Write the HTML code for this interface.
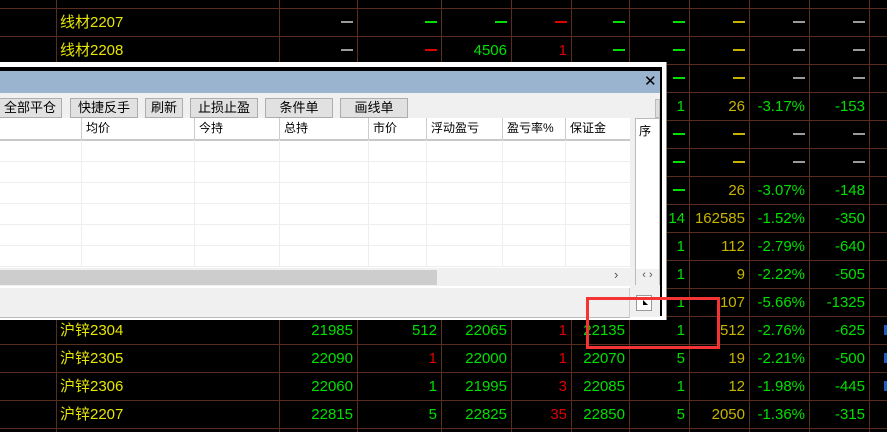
<!DOCTYPE html>
<html><head><meta charset="utf-8">
<style>
*{margin:0;padding:0;box-sizing:border-box}
body{width:887px;height:432px;overflow:hidden;background:#000;position:relative;font-family:"Liberation Sans","Noto Sans CJK SC",sans-serif}
.vl{position:absolute;top:0;height:432px;width:1px;background:#5a2e1e}
.hl{position:absolute;left:0;width:887px;height:1px;background:#5a2e1e}
.r{position:absolute;left:0;width:887px;height:28px;font-size:15px;line-height:29px}
.r span{position:absolute;top:0;text-align:right}
.n{left:60px;width:200px;text-align:left!important;color:#e6e600}
.c1{left:279px;width:74px}.c2{left:357px;width:80px}.c3{left:441px;width:66px}.c4{left:511px;width:56px}
.c5{left:571px;width:54px}.c6{left:629px;width:56px}.c7{left:689px;width:56px}.c8{left:749px;width:56px}.c9{left:809px;width:56px}
.g{color:#00e000}.y{color:#c8b400}.rd{color:#e00000}.gy{color:#9a9a9a}
i.d{display:inline-block;width:12px;height:2px;vertical-align:middle;background:currentColor;margin-bottom:2px}
.dlg{position:absolute;left:0;top:62px;width:667px;height:258px;background:#fff;border-right:1px solid #888}
.inn{position:absolute;left:0;top:5px;width:662px;height:249px;background:#000}
.body{position:absolute;left:0;top:4px;width:660px;height:246px;background:#f0f0f0}
.title{position:absolute;left:0;top:0;width:660px;height:22px;background:#9ab3cf}
.x{position:absolute;left:644px;top:1px;font-size:15px;color:#000}
.btn{position:absolute;top:27px;height:20px;background:#e1e1e1;border:1px solid #adadad;font-size:13px;line-height:18px;text-align:center;color:#000}
.tbl{position:absolute;left:0;top:47px;width:630px;height:167px;background:#fff}
.th{position:absolute;top:0;height:21px;font-size:12px;line-height:21px;padding-left:4px;color:#000;border-left:1px solid #ccc}
.gv{position:absolute;top:22px;height:127px;width:1px;background:#eee}
.gh{position:absolute;left:0;width:630px;height:1px;background:#eee}
</style></head><body>
<div class="vl" style="left:56px"></div><div class="vl" style="left:279px"></div><div class="vl" style="left:357px"></div><div class="vl" style="left:441px"></div><div class="vl" style="left:511px"></div><div class="vl" style="left:571px"></div><div class="vl" style="left:629px"></div><div class="vl" style="left:689px"></div><div class="vl" style="left:749px"></div><div class="vl" style="left:809px"></div><div class="vl" style="left:869px"></div>
<div class="hl" style="top:8px"></div><div class="hl" style="top:36px"></div><div class="hl" style="top:64px"></div><div class="hl" style="top:92px"></div><div class="hl" style="top:120px"></div><div class="hl" style="top:148px"></div><div class="hl" style="top:176px"></div><div class="hl" style="top:204px"></div><div class="hl" style="top:232px"></div><div class="hl" style="top:260px"></div><div class="hl" style="top:288px"></div><div class="hl" style="top:316px"></div><div class="hl" style="top:344px"></div><div class="hl" style="top:372px"></div><div class="hl" style="top:400px"></div><div class="hl" style="top:428px"></div>

<div class="r" style="top:8px"><span class="n">线材2207</span><span class="c1 gy"><i class="d"></i></span><span class="c2 g"><i class="d"></i></span><span class="c3 g"><i class="d"></i></span><span class="c4 rd"><i class="d"></i></span><span class="c5 g"><i class="d"></i></span><span class="c6 g"><i class="d"></i></span><span class="c7 y"><i class="d"></i></span><span class="c8 gy"><i class="d"></i></span><span class="c9 gy"><i class="d"></i></span></div>
<div class="r" style="top:36px"><span class="n">线材2208</span><span class="c1 gy"><i class="d"></i></span><span class="c2 rd"><i class="d"></i></span><span class="c3 g">4506</span><span class="c4 rd">1</span><span class="c5 g"><i class="d"></i></span><span class="c6 g"><i class="d"></i></span><span class="c7 y"><i class="d"></i></span><span class="c8 gy"><i class="d"></i></span><span class="c9 gy"><i class="d"></i></span></div>
<div class="r" style="top:64px"><span class="c6 g"><i class="d"></i></span><span class="c7 y"><i class="d"></i></span><span class="c8 gy"><i class="d"></i></span><span class="c9 gy"><i class="d"></i></span></div>
<div class="r" style="top:92px"><span class="c6 g">1</span><span class="c7 y">26</span><span class="c8 g">-3.17%</span><span class="c9 g">-153</span></div>
<div class="r" style="top:120px"><span class="c6 g"><i class="d"></i></span><span class="c7 y"><i class="d"></i></span><span class="c8 gy"><i class="d"></i></span><span class="c9 gy"><i class="d"></i></span></div>
<div class="r" style="top:148px"><span class="c6 g"><i class="d"></i></span><span class="c7 y"><i class="d"></i></span><span class="c8 gy"><i class="d"></i></span><span class="c9 gy"><i class="d"></i></span></div>
<div class="r" style="top:176px"><span class="c6 g"><i class="d"></i></span><span class="c7 y">26</span><span class="c8 g">-3.07%</span><span class="c9 g">-148</span></div>
<div class="r" style="top:204px"><span class="c6 g">14</span><span class="c7 y">162585</span><span class="c8 g">-1.52%</span><span class="c9 g">-350</span></div>
<div class="r" style="top:232px"><span class="c6 g">1</span><span class="c7 y">112</span><span class="c8 g">-2.79%</span><span class="c9 g">-640</span></div>
<div class="r" style="top:260px"><span class="c6 g">1</span><span class="c7 y">9</span><span class="c8 g">-2.22%</span><span class="c9 g">-505</span></div>
<div class="r" style="top:288px"><span class="c6 g">1</span><span class="c7 y">107</span><span class="c8 g">-5.66%</span><span class="c9 g">-1325</span></div>
<div class="r" style="top:316px"><span class="n">沪锌2304</span><span class="c1 g">21985</span><span class="c2 g">512</span><span class="c3 g">22065</span><span class="c4 rd">1</span><span class="c5 g">22135</span><span class="c6 g">1</span><span class="c7 y">512</span><span class="c8 g">-2.76%</span><span class="c9 g">-625</span></div>
<div class="r" style="top:344px"><span class="n">沪锌2305</span><span class="c1 g">22090</span><span class="c2 rd">1</span><span class="c3 g">22000</span><span class="c4 rd">1</span><span class="c5 g">22070</span><span class="c6 g">5</span><span class="c7 y">19</span><span class="c8 g">-2.21%</span><span class="c9 g">-500</span></div>
<div class="r" style="top:372px"><span class="n">沪锌2306</span><span class="c1 g">22060</span><span class="c2 g">1</span><span class="c3 g">21995</span><span class="c4 rd">3</span><span class="c5 g">22085</span><span class="c6 g">1</span><span class="c7 y">12</span><span class="c8 g">-1.98%</span><span class="c9 g">-445</span></div>
<div class="r" style="top:400px"><span class="n">沪锌2207</span><span class="c1 g">22815</span><span class="c2 g">5</span><span class="c3 g">22825</span><span class="c4 rd">35</span><span class="c5 g">22850</span><span class="c6 g">5</span><span class="c7 y">2050</span><span class="c8 g">-1.36%</span><span class="c9 g">-315</span></div>
<div style="position:absolute;left:884px;top:325px;width:3px;height:10px;background:#1a5fc0"></div>
<div style="position:absolute;left:884px;top:353px;width:3px;height:10px;background:#1a5fc0"></div>
<div style="position:absolute;left:884px;top:381px;width:3px;height:10px;background:#1a5fc0"></div>

<div class="dlg"><div class="inn"><div class="body">
<div class="title"><span class="x">✕</span></div>
<div class="btn" style="left:-2px;width:64px">全部平仓</div>
<div class="btn" style="left:70px;width:68px">快捷反手</div>
<div class="btn" style="left:145px;width:38px">刷新</div>
<div class="btn" style="left:190px;width:68px">止损止盈</div>
<div class="btn" style="left:265px;width:68px">条件单</div>
<div class="btn" style="left:340px;width:68px">画线单</div>
<div style="position:absolute;left:655px;top:28px;width:5px;height:19px;background:#ddd;border:1px solid #bbb"></div>
<div class="tbl">
<div class="th" style="left:-1px;width:82px;border-left:none"></div>
<div class="th" style="left:81px;width:113px">均价</div>
<div class="th" style="left:194px;width:85px">今持</div>
<div class="th" style="left:279px;width:89px">总持</div>
<div class="th" style="left:368px;width:58px">市价</div>
<div class="th" style="left:426px;width:76px">浮动盈亏</div>
<div class="th" style="left:502px;width:63px">盈亏率%</div>
<div class="th" style="left:565px;width:65px">保证金</div>
<div style="position:absolute;left:0;top:21px;width:630px;height:2px;background:#c8c8c8"></div>
<div class="gv" style="left:81px"></div><div class="gv" style="left:194px"></div><div class="gv" style="left:279px"></div><div class="gv" style="left:368px"></div><div class="gv" style="left:426px"></div><div class="gv" style="left:502px"></div><div class="gv" style="left:565px"></div>
<div class="gh" style="top:43px"></div><div class="gh" style="top:64px"></div><div class="gh" style="top:85px"></div><div class="gh" style="top:106px"></div><div class="gh" style="top:127px"></div><div class="gh" style="top:148px"></div>
<div style="position:absolute;left:0;top:150px;width:630px;height:17px;background:#f0f0f0"></div>
<div style="position:absolute;left:0;top:152px;width:437px;height:15px;background:#cdcdcd"></div>
<div style="position:absolute;left:614px;top:149px;font-size:13px;color:#555">›</div>
</div>
<div style="position:absolute;left:635px;top:47px;width:25px;height:167px;background:#fff;border:1px solid #bbb">
<div style="position:absolute;left:3px;top:2px;font-size:12px;line-height:20px">序</div>
<div style="position:absolute;left:0;top:150px;width:23px;height:16px;background:#f0f0f0;font-size:11px;color:#555;text-align:center">‹ ›</div>
</div>
<div style="position:absolute;left:0;top:215px;width:630px;height:2px;background:#fff"></div>
<div style="position:absolute;left:0;top:217px;width:630px;height:30px;border-bottom:1px solid #bbb;border-right:1px solid #ccc"></div>
<div style="position:absolute;left:636px;top:224px;width:16px;height:16px;background:#fff;border:1px solid #999"><div style="position:absolute;left:6px;top:4px;width:0;height:0;border-left:5px solid #000;border-top:5px solid transparent"></div></div>
</div></div></div>
<div style="position:absolute;left:586px;top:297px;width:134px;height:52px;border:3px solid #f43434"></div>
</body></html>
